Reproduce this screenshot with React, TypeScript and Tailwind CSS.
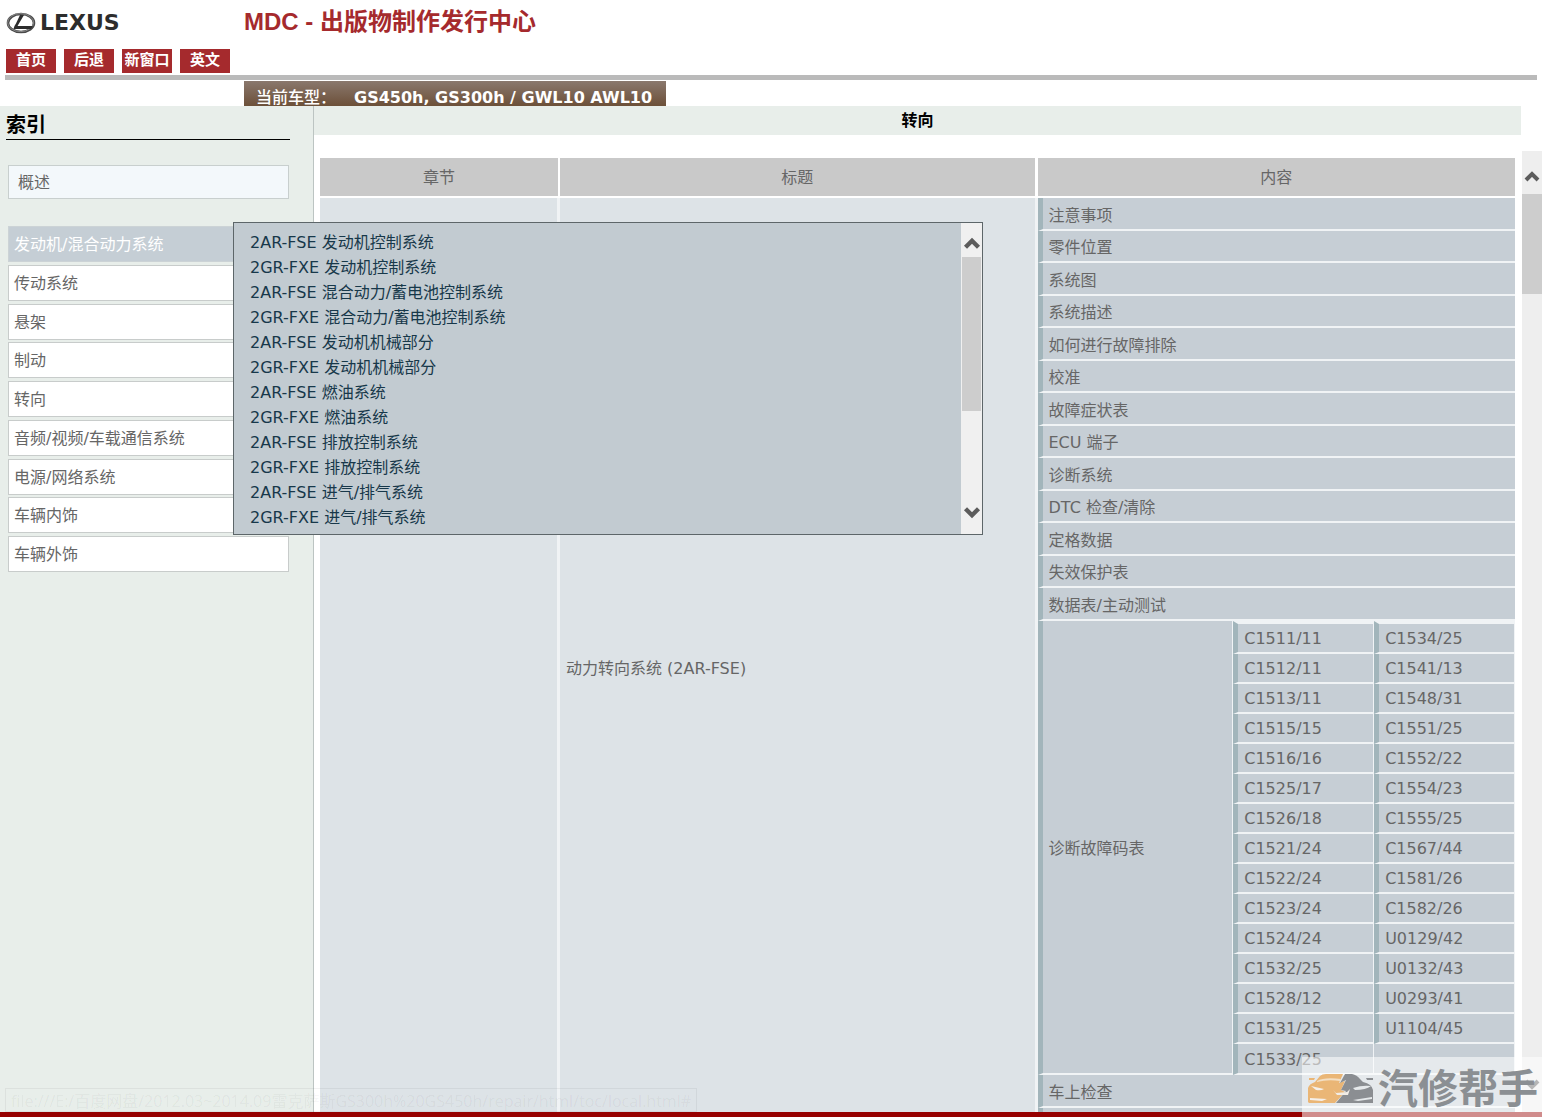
import { ChevronDown, ChevronUp } from "lucide-react";

const actions = ["首页", "后退", "新窗口", "英文"];

const systems = [
  "发动机/混合动力系统",
  "传动系统",
  "悬架",
  "制动",
  "转向",
  "音频/视频/车载通信系统",
  "电源/网络系统",
  "车辆内饰",
  "车辆外饰",
];

const submenu = [
  "2AR-FSE 发动机控制系统",
  "2GR-FXE 发动机控制系统",
  "2AR-FSE 混合动力/蓄电池控制系统",
  "2GR-FXE 混合动力/蓄电池控制系统",
  "2AR-FSE 发动机机械部分",
  "2GR-FXE 发动机机械部分",
  "2AR-FSE 燃油系统",
  "2GR-FXE 燃油系统",
  "2AR-FSE 排放控制系统",
  "2GR-FXE 排放控制系统",
  "2AR-FSE 进气/排气系统",
  "2GR-FXE 进气/排气系统",
];

const contents = [
  "注意事项",
  "零件位置",
  "系统图",
  "系统描述",
  "如何进行故障排除",
  "校准",
  "故障症状表",
  "ECU 端子",
  "诊断系统",
  "DTC 检查/清除",
  "定格数据",
  "失效保护表",
  "数据表/主动测试",
];

const codes = [
  ["C1511/11", "C1534/25"],
  ["C1512/11", "C1541/13"],
  ["C1513/11", "C1548/31"],
  ["C1515/15", "C1551/25"],
  ["C1516/16", "C1552/22"],
  ["C1525/17", "C1554/23"],
  ["C1526/18", "C1555/25"],
  ["C1521/24", "C1567/44"],
  ["C1522/24", "C1581/26"],
  ["C1523/24", "C1582/26"],
  ["C1524/24", "U0129/42"],
  ["C1532/25", "U0132/43"],
  ["C1528/12", "U0293/41"],
  ["C1531/25", "U1104/45"],
  ["C1533/25", ""],
];

function Logo() {
  return (
    <svg width="124" height="24" viewBox="0 0 124 24" role="img" aria-label="Lexus">
      <ellipse cx="16" cy="12" rx="13" ry="9" fill="none" stroke="#4a4a4a" strokeWidth="2.6" />
      <ellipse cx="15.6" cy="11.6" rx="13" ry="9" fill="none" stroke="#9a9a9a" strokeWidth="0.8" />
      <path d="M15 4 H19 L12.5 15 H28 L26 18 H8.5 Q9 15 11 12.5 Z" fill="#2d2d2d" />
      <text
        x="35"
        y="19"
        fontSize="22"
        fontWeight="700"
        fill="#2d2d2d"
        fontFamily="'DejaVu Sans', sans-serif"
      >
        LEXUS
      </text>
    </svg>
  );
}

function Header() {
  return (
    <header className="flex h-[106px] shrink-0 flex-col pr-[5px] pl-[5px]">
      <div className="flex h-[75px] shrink-0">
        <div className="flex w-[239px] shrink-0 flex-col pt-[11px]">
          <Logo />
          <div className="flex gap-2 pt-[14px] pl-px">
            {actions.map((label) => (
              <button
                key={label}
                className="h-6 w-[50px] whitespace-nowrap bg-[#a52a2d] pb-0.5 text-[15px] leading-5 font-bold text-white"
              >
                {label}
              </button>
            ))}
          </div>
        </div>
        <h1 className="pt-1 font-['Liberation_Sans','Noto_Sans_CJK_SC',sans-serif] text-2xl leading-9 font-bold text-[#a52a2d]">
          MDC - 出版物制作发行中心
        </h1>
      </div>
      <div className="h-[5px] shrink-0 bg-[#bababa]" />
      <div className="mt-px ml-[239px] flex h-[25px] w-[422px] shrink-0 items-end gap-3 bg-linear-to-b from-[#8a786d] to-[#6c5039] pl-3 leading-4 font-bold whitespace-nowrap text-white">
        <span className="w-[86px] font-medium">当前车型：</span>
        <span>GS450h, GS300h / GWL10 AWL10</span>
      </div>
    </header>
  );
}

function Sidebar() {
  return (
    <aside className="w-[314px] shrink-0 border-r border-[#bcc4c2] bg-[#e8eeea] pt-1 pl-1.5">
      <h2 className="mr-[23px] border-b border-black pt-0.5 text-xl leading-[27px] font-bold text-black">
        索引
      </h2>
      <nav className="mr-6 ml-0.5 pt-[25px]">
        <a
          href="#overview"
          className="flex h-[34px] items-center border border-[#c8cfce] bg-[#f3f8fb] pt-0.5 pl-[9px]"
        >
          概述
        </a>
        <ul className="mt-[27px] flex h-[346px] flex-col justify-between">
          {systems.map((name, i) => (
            <li key={name}>
              <a
                href="#system"
                className={
                  i === 0
                    ? "flex h-9 items-center border border-[#ccd3d6] bg-[#c5ced5] pt-0.5 pl-[5px] text-white"
                    : "flex h-9 items-center border border-[#c8cccb] bg-white pt-0.5 pl-[5px]"
                }
              >
                {name}
              </a>
            </li>
          ))}
        </ul>
      </nav>
    </aside>
  );
}

function Submenu() {
  return (
    <div className="absolute top-[116px] left-[233px] flex h-[313px] w-[750px] border border-[#5d6669] bg-[#c2cbd1]">
      <ul className="flex-1 pt-[7px] pl-4 text-[#17384a]">
        {submenu.map((name) => (
          <li key={name} className="h-[25px] leading-[25px]">
            <a href="#section">{name}</a>
          </li>
        ))}
      </ul>
      <div className="flex w-[21px] flex-col items-center bg-[#f0f0f0]">
        <button aria-label="向上滚动" className="flex h-[34px] shrink-0 items-center pt-2">
          <ChevronUp size={26} strokeWidth={4} strokeLinecap="butt" strokeLinejoin="miter" className="text-[#5c5c5c]" />
        </button>
        <div className="h-[154px] w-full shrink-0 border-x border-[#f0f0f0] bg-[#cdcdcd]" />
        <button aria-label="向下滚动" className="mt-auto flex h-11 items-center">
          <ChevronDown size={26} strokeWidth={4} strokeLinecap="butt" strokeLinejoin="miter" className="text-[#5c5c5c]" />
        </button>
      </div>
    </div>
  );
}

function CodeTable() {
  return (
    <table className="w-full table-fixed border-separate border-spacing-0">
      <colgroup>
        <col className="w-[41%]" />
        <col />
        <col />
      </colgroup>
      <tbody>
        {codes.map(([left, right], i) => (
          <tr key={left} className="h-[30px] first:h-[33px] last:h-[31px]">
            {i === 0 && (
              <td
                rowSpan={codes.length}
                className="border-r border-b-2 border-l-[5px] border-r-[#f0f3f5] border-b-[#f0f3f5] border-l-[#a2b5bb] pt-1 pl-1.5"
              >
                诊断故障码表
              </td>
            )}
            <td
              className={
                i === 0
                  ? "border-t-[3px] border-r border-b-2 border-l-[5px] border-y-[#f0f3f5] border-r-[#f0f3f5] border-l-[#a2b5bb] pt-0.5 pl-1.5 leading-6"
                  : "border-r border-b-2 border-l-[5px] border-r-[#f0f3f5] border-b-[#f0f3f5] border-l-[#a2b5bb] pt-0.5 pl-1.5 leading-6"
              }
            >
              {left}
            </td>
            <td
              className={
                i === 0
                  ? "border-t-[3px] border-r border-b-2 border-l-[5px] border-y-[#f0f3f5] border-r-[#f0f3f5] border-l-[#a2b5bb] pt-0.5 pl-1.5 leading-6"
                  : right
                    ? "border-r border-b-2 border-l-[5px] border-r-[#f0f3f5] border-b-[#f0f3f5] border-l-[#a2b5bb] pt-0.5 pl-1.5 leading-6"
                    : "border-r border-b-2 border-[#f0f3f5]"
              }
            >
              {right}
            </td>
          </tr>
        ))}
      </tbody>
    </table>
  );
}

function Contents() {
  const span = contents.length + 3;
  const cell =
    "border-b-2 border-l-[5px] border-b-[#f0f3f5] border-l-[#a2b5bb] bg-[#c6ced5] pt-1 pl-1.5 leading-6";

  return (
    <section className="flex min-w-0 flex-1 flex-col">
      <h2 className="mr-[21px] h-[29px] shrink-0 bg-[#e8eeea] text-center leading-[29px] font-bold text-black">
        转向
      </h2>
      <div className="flex min-h-0 flex-1">
        <div className="min-w-0 flex-1 overflow-hidden pt-[23px] pr-[7px] pl-1.5">
          <table className="w-full table-fixed border-separate border-spacing-0">
            <colgroup>
              <col className="w-[240px]" />
              <col />
              <col />
            </colgroup>
            <thead>
              <tr className="h-10 bg-[#c9c9c9]">
                <th className="border-r-2 border-b-2 border-white pt-0.5 font-normal">章节</th>
                <th className="border-r-3 border-b-2 border-white pt-0.5 font-normal">标题</th>
                <th className="border-b-2 border-white pt-0.5 font-normal">内容</th>
              </tr>
            </thead>
            <tbody>
              {contents.map((name, i) => (
                <tr key={name} className="odd:h-[33px] even:h-8">
                  {i === 0 && (
                    <>
                      <td rowSpan={span} className="border-r-3 border-[#f0f3f5] bg-[#dde3e7]" />
                      <td rowSpan={span} className="border-r-3 border-[#f0f3f5] bg-[#dde3e7] pl-1.5">
                        动力转向系统 (2AR-FSE)
                      </td>
                    </>
                  )}
                  <td className={cell}>{name}</td>
                </tr>
              ))}
              <tr>
                <td className="bg-[#c6ced5]">
                  <CodeTable />
                </td>
              </tr>
              <tr className="h-[33px]">
                <td className={cell}>车上检查</td>
              </tr>
              <tr className="h-8">
                <td className={cell} />
              </tr>
            </tbody>
          </table>
        </div>
        <div className="mt-4 flex w-5 shrink-0 flex-col items-center bg-[#eee]">
          <button aria-label="向上滚动" className="flex h-[43px] shrink-0 items-center pt-2">
            <ChevronUp size={24} strokeWidth={4} strokeLinecap="butt" strokeLinejoin="miter" className="text-[#5c5c5c]" />
          </button>
          <div className="h-[100px] w-full shrink-0 bg-[#cdcdcd]" />
          <button aria-label="向下滚动" className="mt-auto flex h-14 items-center">
            <ChevronDown size={24} strokeWidth={4} strokeLinecap="butt" strokeLinejoin="miter" className="text-[#5c5c5c]" />
          </button>
        </div>
      </div>
    </section>
  );
}

function Watermark() {
  return (
    <div className="absolute right-0 bottom-0 flex h-[60px] w-60 items-center gap-1 bg-white/55 pt-1 pl-1.5">
      <svg width="66" height="32" viewBox="0 0 66 32" className="shrink-0" aria-hidden="true">
        <path
          d="M0 29 V15 Q1 11 7 9 L12 3 Q14 1 18 1 H35 L31 10 L37 8 L33 17 L37 19 L27 30 H1 Z"
          fill="#eab676"
        />
        <path
          d="M37 1 H44 Q49 2 52 6 L55 9 Q64 11 65 17 V30 H28 L38 18 L33 17 L38 7 L32 10 Z"
          fill="#8b8e92"
        />
        <path d="M9 8 Q16 4 33 6 L32 8 Q20 6 9 9 Z" fill="#f3dfc4" />
        <path d="M3 13 L16 16 Q13 18 8 17 Z M2 25 L19 26 L14 28 L2 27 Z" fill="#f5f0ea" />
        <path d="M45 15 Q54 12 63 13 Q58 17 47 17 Z M45 27 L64 24 V26 L50 28 Z" fill="#e6e9eb" />
        <path d="M25 17 L28 20 L39 19 L42 16 L40 22 L29 22 Z" fill="#f1ece5" />
        <path d="M1 5 H7 L6 7 H1 Z" fill="#eab676" />
        <path d="M58 5 H65 V7 H59 Z" fill="#8b8e92" />
      </svg>
      <span className="text-[40px] leading-none font-bold whitespace-nowrap text-[#8b8f93]">
        汽修帮手
      </span>
    </div>
  );
}

export default function App() {
  return (
    <div className="relative flex h-screen flex-col overflow-hidden bg-white font-['DejaVu_Sans','Noto_Sans_CJK_SC',sans-serif] text-base text-[#666]">
      <Header />
      <main className="relative flex min-h-0 flex-1">
        <Sidebar />
        <Contents />
        <Submenu />
      </main>
      <footer className="h-[5px] shrink-0 bg-[#960000]" />
      <div className="absolute bottom-[5px] left-[5px] h-6 border border-black/5 px-[5px] font-['Open_Sans','Noto_Sans_CJK_SC',sans-serif] leading-6 whitespace-nowrap text-black/5">
        file:///E:/百度网盘/2012.03~2014.09雷克萨斯GS300h%20GS450h/repair/html/toc/local.html#
      </div>
      <Watermark />
    </div>
  );
}
